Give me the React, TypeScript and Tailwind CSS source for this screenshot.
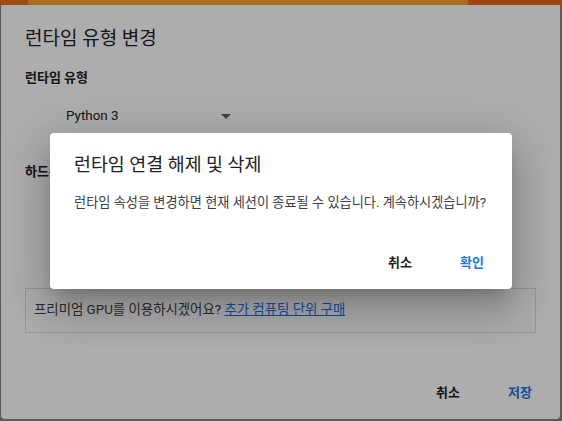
const font = { fontFamily: '"Roboto", "Noto Sans CJK KR", sans-serif' }

function Caret() {
  return (
    <svg width="10" height="5" viewBox="0 0 10 5" className="fill-[#5f6368]">
      <path d="M0 0h10L5 5z" />
    </svg>
  )
}

export default function App() {
  return (
    <div
      className="relative flex h-[421px] w-[562px] flex-col overflow-hidden bg-[#858585] text-[#202124]"
      style={font}
    >
      {/* 뒤쪽 페이지 상단 바 */}
      <div className="flex h-[5px] shrink-0">
        <div className="w-[28px] bg-[#ee711d]" />
        <div className="flex-1 bg-[#f99f2c]" />
        <div className="w-[94px] bg-[#e7651d]" />
      </div>

      <div className="flex flex-1 pl-px pb-[2px]">
        {/* 런타임 유형 변경 다이얼로그 */}
        <div className="flex h-[414px] w-[559px] flex-col rounded-b-[4px] bg-white px-6">
          <h1 className="pt-[18px] text-[19px] leading-8 text-[#202124]">런타임 유형 변경</h1>
          <div className="mt-[13px] text-[13px] font-bold leading-5">런타임 유형</div>
          <div className="mt-2 ml-[41px] flex h-10 w-[165px] items-center justify-between text-[13.4px]">
            <span>Python 3</span>
            <Caret />
          </div>
          <div className="mt-[26px] text-[13px] font-bold leading-5">하드웨어 가속기</div>
          <div className="mt-[106px] flex h-[45px] items-center border border-[#dadce0] px-2 text-[13.4px] text-[#3c4043]">
            <span>프리미엄 GPU를 이용하시겠어요?&nbsp;</span>
            <a className="text-[#1a73e8] underline">추가 컴퓨팅 단위 구매</a>
          </div>
          <div className="mt-auto -mr-4 mb-2 flex justify-end gap-2">
            <button className="h-9 min-w-16 px-2 text-[13px] font-bold text-[#202124]">취소</button>
            <button className="h-9 min-w-16 px-2 text-[13px] font-bold text-[#1a73e8]">저장</button>
          </div>
        </div>
      </div>

      {/* 배경 스크림 + 확인 다이얼로그 */}
      <div className="absolute inset-0 flex items-center justify-center bg-black/[0.32]">
        <div className="flex w-[462px] flex-col rounded-[4px] bg-white shadow-[0_11px_15px_-7px_rgba(0,0,0,0.2),0_24px_38px_3px_rgba(0,0,0,0.14),0_9px_46px_8px_rgba(0,0,0,0.12)]">
          <h2 className="px-6 pt-4 text-[18.4px] leading-8 text-[#202124]">런타임 연결 해제 및 삭제</h2>
          <p className="mt-3 whitespace-nowrap px-6 text-[13.2px] leading-5 text-[#3c4043]">
            런타임 속성을 변경하면 현재 세션이 종료될 수 있습니다. 계속하시겠습니까?
          </p>
          <div className="mt-8 flex justify-end gap-2 px-2 pb-2">
            <button className="h-9 min-w-16 px-2 text-[13px] font-bold text-[#202124]">취소</button>
            <button className="h-9 min-w-16 px-2 text-[13px] font-bold text-[#1a73e8]">확인</button>
          </div>
        </div>
      </div>
    </div>
  )
}
